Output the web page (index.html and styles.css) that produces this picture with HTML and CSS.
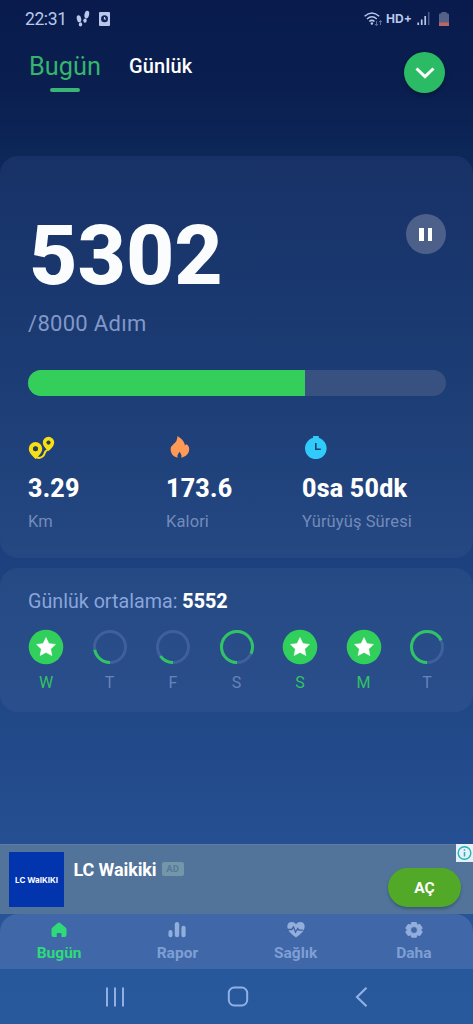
FILE: index.html
```html
<!DOCTYPE html>
<html lang="tr">
<head>
<meta charset="utf-8">
<title>Adım Sayar</title>
<link rel="stylesheet" href="styles.css">
</head>
<body>
<div class="screen">
  <div class="status">
    <span class="clock">22:31</span>
    <svg class="steps" width="14" height="18" viewBox="0 0 14 18"><g fill="#b9c8ea"><ellipse cx="3" cy="8.700" rx="2.200" ry="3.600" transform="rotate(-12 3 8.700)"/><ellipse cx="4.500" cy="14.400" rx="1.700" ry="2.100"/><ellipse cx="10.800" cy="4.600" rx="2.300" ry="4" transform="rotate(12 10.800 4.600)"/><ellipse cx="9" cy="10.600" rx="1.700" ry="2.200"/></g></svg>
    <svg width="11" height="14" viewBox="0 0 11 14"><rect width="11" height="14" rx="1" fill="#b9c8ea"/><circle cx="5.500" cy="6.700" r="3.500" fill="#10265a"/><path d="M5.500 5v2h1.600" stroke="#b9c8ea" stroke-width="1.200" fill="none"/></svg>
    <span class="spacer"></span>
    <svg class="wifi" width="19" height="15" viewBox="0 0 19 15"><g fill="none" stroke="#b9c8ea" stroke-width="1.500"><path d="M.6 4.300q7.200-6.600 14.600 0M3 7q4.900-4.400 9.800 0M5.300 9.500q2.600-2.200 5.200 0"/></g><circle cx="7.900" cy="11.500" r="1.200" fill="#b9c8ea"/><path d="M12.500 9v4.500M11 12l1.500 1.800L14 12M16.500 13V8.500M15 10.200l1.500-1.800L18 10.200" fill="none" stroke="#5a6d9b"/></svg>
    <span class="hd">HD+</span>
    <svg class="signal" width="13" height="14" viewBox="0 0 13 14"><path d="M1.200 10.500V13M4.700 7.500V13M8.200 4V13" stroke="#b9c8ea" stroke-width="1.700"/><path d="M11.700 0V13" stroke="#485d8c" stroke-width="1.500"/></svg>
    <svg class="battery" width="10" height="14" viewBox="0 0 10 14"><path d="M0 2.500q0-1.200 2.500-1.300V0h5v1.200Q10 1.300 10 2.500V14H0z" fill="#536286"/><path d="M0 10.500h10V14H0z" fill="#bd6563"/></svg>
  </div>

  <div class="top">
    <div class="tab-active">Bugün</div>
    <div class="tab">Günlük</div>
    <div class="chevron"><svg width="20" height="14" viewBox="0 0 20 14"><path d="M1.500 2.500 10 10.700l8.500-8.200" fill="none" stroke="#fff" stroke-width="3"/></svg></div>
  </div>

  <section class="card today">
    <div class="count-row">
      <div class="count">5302</div>
      <div class="pause"><i></i><i></i></div>
    </div>
    <div class="goal">/8000 Adım</div>
    <div class="progress"><div class="fill" style="width:66.3%"></div></div>
    <div class="stats">
      <div>
        <svg width="27" height="24" viewBox="0 0 27 24"><path d="M7.500 21q3.500 2 7-.5 1.700-1.300 2.200-3.500.5-2 3.800-4" fill="none" stroke="#f7df16" stroke-width="2"/><path fill="#f7df16" fill-rule="evenodd" d="M7.500 6a6.700 6.700 0 0 1 6.700 6.700q0 3.800-4.200 7.800L7.500 23 5 20.500Q.8 16.500.8 12.700A6.700 6.700 0 0 1 7.500 6zm0 4.300a2.500 2.500 0 1 0 0 5 2.500 2.500 0 0 0 0-5zM20.500.8a5.700 5.700 0 0 1 5.700 5.700q0 3.200-3.700 6.700l-2 1.800-2-1.800q-3.700-3.500-3.700-6.700A5.700 5.700 0 0 1 20.500.8zm0 3.800a2 2 0 1 0 0 4 2 2 0 0 0 0-4z"/><circle cx="7.500" cy="12.800" r="2.400" fill="#2c3f50"/><circle cx="20.500" cy="6.600" r="1.900" fill="#2c3f50"/></svg>
        <div class="value">3.29</div><div class="label">Km</div>
      </div>
      <div>
        <svg width="27" height="24" viewBox="0 0 27 24"><path fill="#ff9956" d="M11.500 0q4 2.500 6 5.500 1.300 2 1.200 4l1.500-1.300Q23.300 9.500 23.200 13.500q-.3 5-5.200 7.300l-2.700.9q.7-2-.4-3.700l-1.300-2.300-1.500 2.300q-1.200 1.800-.5 3.800-7-2-7-8.300 0-3.200 3-5.500Q11.500 5 11.500 0z"/></svg>
        <div class="value">173.6</div><div class="label">Kalori</div>
      </div>
      <div>
        <svg width="27" height="24" viewBox="0 0 27 24"><circle cx="13.800" cy="12.300" r="10.800" fill="#30cbfa"/><path d="M11 0h5.800v3H11z" fill="#30cbfa"/><path d="M13.800 7v6.300h5" fill="none" stroke="#17406c" stroke-width="1.600"/></svg>
        <div class="value">0sa 50dk</div><div class="label">Yürüyüş Süresi</div>
      </div>
    </div>
  </section>

  <section class="card week">
    <div class="average">Günlük ortalama: <b>5552</b></div>
    <div class="days">
      <div class="day done"><svg viewBox="0 0 36 36"><circle cx="18" cy="18" r="17.300" fill="#31cf5b"/><path class="star" d="M18 8.500l2.900 6 6.600.9-4.800 4.600 1.200 6.600-5.900-3.200-5.900 3.200 1.200-6.600-4.800-4.600 6.600-.9z"/></svg>W</div>
      <div class="day"><svg viewBox="0 0 36 36"><circle class="ring" cx="18" cy="18" r="15.500"/><circle class="arc" cx="18" cy="18" r="15.500" pathLength="100" stroke-dasharray="22 100"/></svg>T</div>
      <div class="day"><svg viewBox="0 0 36 36"><circle class="ring" cx="18" cy="18" r="15.500"/><circle class="arc" cx="18" cy="18" r="15.500" pathLength="100" stroke-dasharray="15 100"/></svg>F</div>
      <div class="day"><svg viewBox="0 0 36 36"><circle class="ring" cx="18" cy="18" r="15.500"/><circle class="arc" cx="18" cy="18" r="15.500" pathLength="100" stroke-dasharray="82 100"/></svg>S</div>
      <div class="day done"><svg viewBox="0 0 36 36"><circle cx="18" cy="18" r="17.300" fill="#31cf5b"/><path class="star" d="M18 8.500l2.900 6 6.600.9-4.800 4.600 1.200 6.600-5.900-3.200-5.900 3.200 1.200-6.600-4.800-4.600 6.600-.9z"/></svg>S</div>
      <div class="day done"><svg viewBox="0 0 36 36"><circle cx="18" cy="18" r="17.300" fill="#31cf5b"/><path class="star" d="M18 8.500l2.900 6 6.600.9-4.800 4.600 1.200 6.600-5.900-3.200-5.900 3.200 1.200-6.600-4.800-4.600 6.600-.9z"/></svg>M</div>
      <div class="day"><svg viewBox="0 0 36 36"><circle class="ring" cx="18" cy="18" r="15.500"/><circle class="arc" cx="18" cy="18" r="15.500" pathLength="100" stroke-dasharray="68 100"/></svg>T</div>
    </div>
  </section>

  <div class="ad">
    <div class="ad-logo"><span>LC WaIKIKI</span></div>
    <div class="ad-title">LC Waikiki</div>
    <div class="ad-tag">AD</div>
    <div class="ad-open">AÇ</div>
    <div class="ad-info"><svg width="17" height="18" viewBox="0 0 17 18"><circle cx="8.500" cy="9" r="6.300" fill="none" stroke="#25b3b5" stroke-width="1.400"/><path d="M8.500 8v4.500M8.500 5.200v1.500" stroke="#25b3b5" stroke-width="1.500"/></svg></div>
  </div>

  <nav class="nav">
    <div class="on"><svg width="18" height="18" viewBox="0 0 18 18"><path fill="currentColor" d="M9 1.500q.7 0 1.500.700L15.500 6.500q1 1 1 2V14q0 2-2 2H11.500v-3q0-1-1-1H7.700q-1 0-1 1v3h-3.200q-2 0-2-2V8.500q0-1 1-2L7.500 2.200Q8.300 1.500 9 1.500z"/></svg>Bugün</div>
    <div><svg width="18" height="18" viewBox="0 0 18 18"><g fill="currentColor"><rect x="0.500" y="9" width="4" height="7.300" rx="2"/><rect x="6.800" y="1" width="4.400" height="15.300" rx="2.200"/><rect x="13.400" y="4.700" width="4.200" height="11.600" rx="2.100"/></g></svg>Rapor</div>
    <div><svg width="18" height="18" viewBox="0 0 18 18"><path fill="currentColor" d="M9 16.500Q.3 10.500.3 5.800.3 1 4.800 1 7.500 1 9 3.300 10.500 1 13.200 1q4.500 0 4.500 4.800 0 4.700-8.700 10.700z"/><path d="M0 8.500h4.700L6.500 6l2 5 2.300-3.500 1 1.700h4" fill="none" stroke="#405f9f" stroke-width="1.300"/></svg>Sağlık</div>
    <div><svg width="18" height="18" viewBox="0 0 18 18"><path fill="currentColor" stroke="currentColor" stroke-linejoin="round" fill-rule="evenodd" d="M6.700 1.500h4.600l.8 2.600 2.900-.6L17.300 7.300 15.500 9l1.800 1.800-2.300 3.700-2.900-.7-.8 2.400H6.700l-.8-2.400-2.900.7L.7 10.800 2.500 9 .7 7.300 3 3.500l2.900.6zM9 5.500a3.500 3.500 0 1 0 0 7 3.500 3.500 0 0 0 0-7z"/></svg>Daha</div>
  </nav>

  <div class="system">
    <svg width="20" height="20" viewBox="0 0 20 20"><path d="M2 .500v19M10 .500v19M18 .500v19" stroke="#90b0e5" stroke-width="2"/></svg>
    <svg width="22" height="22" viewBox="0 0 22 22"><rect x="1.800" y="1.500" width="18.400" height="18" rx="5.500" fill="none" stroke="#90b0e5" stroke-width="2"/></svg>
    <svg width="22" height="22" viewBox="0 0 22 22"><path d="M15.500 1.800 6 11l9.500 9.200" fill="none" stroke="#90b0e5" stroke-width="2.200"/></svg>
  </div>
</div>
</body>
</html>
```
FILE: styles.css
```css
* { box-sizing: border-box; }
body { margin: 0; font-family: Roboto, "Noto Sans", sans-serif; }
svg { display: block; flex: none; }
.screen {
  width: 473px; height: 1024px; overflow: hidden;
  display: flex; flex-direction: column;
  background: linear-gradient(#081b4c 0, #0a1f50 90px, #0c2758 155px, #1c417e 560px, #214887 720px, #254f92 840px, #27589b 970px, #27599c 1024px);
}
.status { height: 38px; padding: 0 24px 0 25px; display: flex; align-items: center; color: #b9c8ea; }
.clock { font-size: 17.500px; width: 51px; line-height: 38px; letter-spacing: -.4px; }
.steps { margin-right: 9px; }
.spacer { flex: 1; }
.wifi { margin-right: 3px; }
.hd { font: 700 12px/38px Inter, sans-serif; width: 26px; white-space: nowrap; }
.signal { margin: 0 9px 0 5px; }

.top { height: 118px; padding: 12px 28px 0 29px; display: flex; align-items: flex-start; }
.tab-active { width: 72px; font-size: 25.300px; font-weight: 450; line-height: 34px; color: #35b56b; text-align: center; }
.tab-active::after { content: ""; display: block; width: 30px; height: 4px; border-radius: 2px; background: #3ab578; margin: 4px auto 0; }
.tab { margin-left: 28px; font-size: 20px; font-weight: 500; line-height: 33px; letter-spacing: .15px; color: #fff; }
.chevron {
  width: 41px; height: 41px; margin: 2px 0 0 auto; border-radius: 50%;
  background: #2abb64; display: flex; align-items: center; justify-content: center;
  box-shadow: 0 2px 4px rgba(0, 0, 0, .3);
}

.card { border-radius: 18px; padding: 0 28px; }
.today { height: 402px; padding-right: 27px; background: linear-gradient(rgba(140, 160, 255, .09), rgba(140, 170, 255, .06) 50%, rgba(255, 255, 255, .04)); }
.count-row { display: flex; justify-content: space-between; height: 146px; padding-top: 48px; }
.count { margin-left: 1px; font-size: 84px; font-weight: 850; line-height: 104px; color: #fafcfd; }
.pause {
  width: 40px; height: 40px; margin: 10px .500px 0 0; border-radius: 50%;
  background: #4d608a; display: flex; gap: 4px; align-items: center; justify-content: center;
}
.pause i { width: 4.500px; height: 13px; background: #fff; }
.goal { font-size: 22px; line-height: 43px; color: #8298c8; letter-spacing: .3px; }
.progress { height: 26px; margin-top: 25px; border-radius: 13px; overflow: hidden; background: #385180; }
.fill { height: 100%; background: #34cf5a; }
.stats { display: grid; grid-template-columns: 138px 136px 1fr; margin-top: 40px; }
.value { margin-top: 11px; font-size: 25px; font-weight: 850; line-height: 36px; color: #fff; white-space: nowrap; letter-spacing: .25px; }
.label { font-size: 16.500px; line-height: 30px; color: #738bbb; letter-spacing: .1px; }

.week { height: 144px; margin-top: 10px; background: rgba(255, 255, 255, .045); }
.average { padding-top: 15px; font-size: 19.700px; line-height: 37px; color: #8aa5dc; }
.average b { color: #fff; font-weight: 800; }
.days { display: flex; justify-content: space-between; margin-top: 9px; }
.day { width: 36px; font-size: 16px; line-height: 36px; text-align: center; color: #6983b9; }
.day svg { width: 36px; height: 36px; }
.done { color: #32c365; }
.star { fill: #fff; stroke: #fff; stroke-width: .5; stroke-linejoin: round; }
.ring, .arc { fill: none; stroke-width: 3; }
.ring { stroke: #3f609b; }
.arc { stroke: #2fc565; transform: rotate(90deg); transform-origin: center; }

.ad { position: relative; height: 70px; margin-top: 132px; padding-left: 9px; display: flex; background: #53749a; border-top: 1px solid #5e7ca1; }
.ad-logo { width: 55px; height: 55px; margin-top: 7px; background: #0234ae; color: #fff; display: flex; align-items: center; justify-content: center; }
.ad-logo span { font: 700 8px/10px Inter, sans-serif; white-space: nowrap; letter-spacing: 0; }
.ad-title { margin: 10px 0 0 9.500px; font-size: 18px; font-weight: 700; line-height: 29px; color: #fff; letter-spacing: -.1px; }
.ad-tag { width: 22px; height: 14px; margin: 17px 0 0 5px; border-radius: 2px; background: #7397a8; color: #53799b; font: 700 9.500px/14px Roboto, sans-serif; text-align: center; }
.ad-open { width: 73px; height: 39px; margin: 23px 12px 0 auto; border-radius: 20px; background: #51a927; color: #fff; font-size: 15.500px; font-weight: 700; line-height: 40px; text-align: center; box-shadow: 0 2px 3px rgba(20, 50, 80, .4); }
.ad-info { position: absolute; top: -1px; right: 0; width: 17px; height: 18px; background: #e4f0fa; }

.nav { height: 55px; padding-top: 7px; border-radius: 18px 18px 0 0; background: #4068a8; display: grid; grid-template-columns: repeat(4, 118.250px); justify-items: center; }
.nav div { display: flex; flex-direction: column; align-items: center; font-size: 15.500px; font-weight: 700; line-height: 28px; color: #7f9fd4; }
.nav svg { color: #91aedd; }
.nav .on, .nav .on svg { color: #2edb78; }

.system { height: 55px; display: flex; align-items: center; justify-content: space-between; padding: 0 100px 0 105px; }
```
